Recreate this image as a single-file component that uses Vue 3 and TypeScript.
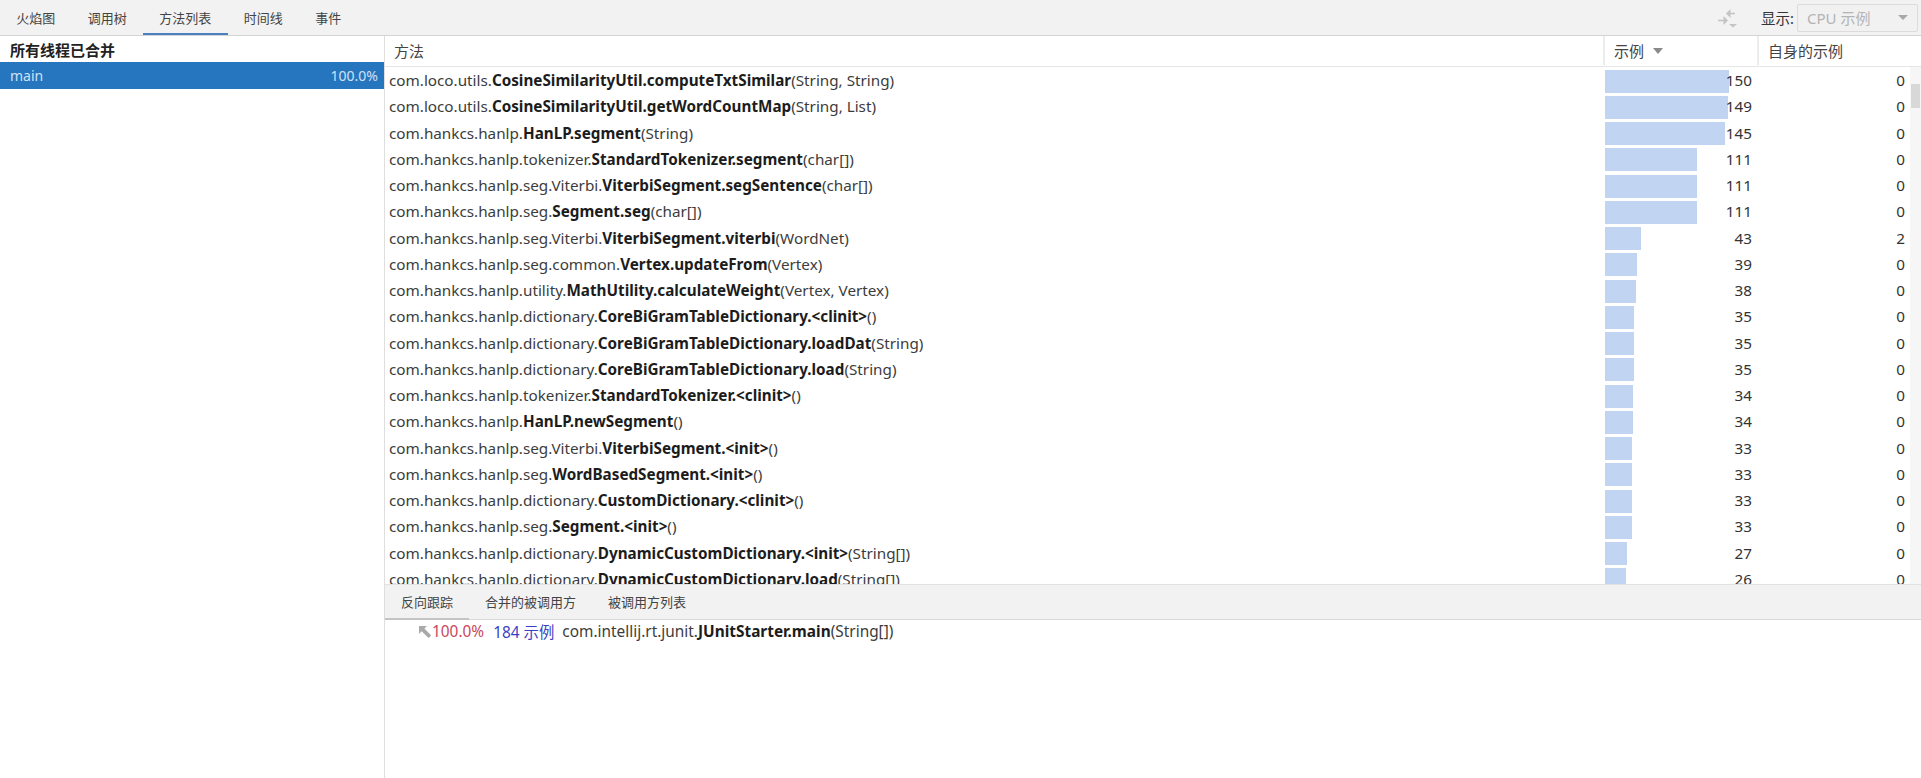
<script setup lang="ts">
interface Row {
  prefix: string
  name: string
  args: string
  samples: number
  self: number
}

const topTabs = ['火焰图', '调用树', '方法列表', '时间线', '事件']
const bottomTabs = ['反向跟踪', '合并的被调用方', '被调用方列表']

const rows: Row[] = [
  { prefix: 'com.loco.utils.', name: 'CosineSimilarityUtil.computeTxtSimilar', args: '(String, String)', samples: 150, self: 0 },
  { prefix: 'com.loco.utils.', name: 'CosineSimilarityUtil.getWordCountMap', args: '(String, List)', samples: 149, self: 0 },
  { prefix: 'com.hankcs.hanlp.', name: 'HanLP.segment', args: '(String)', samples: 145, self: 0 },
  { prefix: 'com.hankcs.hanlp.tokenizer.', name: 'StandardTokenizer.segment', args: '(char[])', samples: 111, self: 0 },
  { prefix: 'com.hankcs.hanlp.seg.Viterbi.', name: 'ViterbiSegment.segSentence', args: '(char[])', samples: 111, self: 0 },
  { prefix: 'com.hankcs.hanlp.seg.', name: 'Segment.seg', args: '(char[])', samples: 111, self: 0 },
  { prefix: 'com.hankcs.hanlp.seg.Viterbi.', name: 'ViterbiSegment.viterbi', args: '(WordNet)', samples: 43, self: 2 },
  { prefix: 'com.hankcs.hanlp.seg.common.', name: 'Vertex.updateFrom', args: '(Vertex)', samples: 39, self: 0 },
  { prefix: 'com.hankcs.hanlp.utility.', name: 'MathUtility.calculateWeight', args: '(Vertex, Vertex)', samples: 38, self: 0 },
  { prefix: 'com.hankcs.hanlp.dictionary.', name: 'CoreBiGramTableDictionary.<clinit>', args: '()', samples: 35, self: 0 },
  { prefix: 'com.hankcs.hanlp.dictionary.', name: 'CoreBiGramTableDictionary.loadDat', args: '(String)', samples: 35, self: 0 },
  { prefix: 'com.hankcs.hanlp.dictionary.', name: 'CoreBiGramTableDictionary.load', args: '(String)', samples: 35, self: 0 },
  { prefix: 'com.hankcs.hanlp.tokenizer.', name: 'StandardTokenizer.<clinit>', args: '()', samples: 34, self: 0 },
  { prefix: 'com.hankcs.hanlp.', name: 'HanLP.newSegment', args: '()', samples: 34, self: 0 },
  { prefix: 'com.hankcs.hanlp.seg.Viterbi.', name: 'ViterbiSegment.<init>', args: '()', samples: 33, self: 0 },
  { prefix: 'com.hankcs.hanlp.seg.', name: 'WordBasedSegment.<init>', args: '()', samples: 33, self: 0 },
  { prefix: 'com.hankcs.hanlp.dictionary.', name: 'CustomDictionary.<clinit>', args: '()', samples: 33, self: 0 },
  { prefix: 'com.hankcs.hanlp.seg.', name: 'Segment.<init>', args: '()', samples: 33, self: 0 },
  { prefix: 'com.hankcs.hanlp.dictionary.', name: 'DynamicCustomDictionary.<init>', args: '(String[])', samples: 27, self: 0 },
  { prefix: 'com.hankcs.hanlp.dictionary.', name: 'DynamicCustomDictionary.load', args: '(String[])', samples: 26, self: 0 },
]

const barWidth = (n: number): string => `${(n / 150) * 124}px`
</script>

<template>
  <div class="app">
    <header class="topbar">
      <nav class="tabs">
        <span v-for="t in topTabs" :key="t" class="tab" :class="{ active: t === '方法列表' }">{{ t }}</span>
      </nav>
      <div class="tools">
        <svg class="tool-icon" width="20" height="20" viewBox="0 0 20 20">
          <path d="M8 5.5 12.5 1v9z" fill="#c4c4c4" />
          <path d="M12 5.5h5" stroke="#c4c4c4" stroke-width="1.6" />
          <path d="M10 12.5 5.5 8v9z" fill="#c4c4c4" />
          <path d="M0 12.5h6" stroke="#c4c4c4" stroke-width="1.6" />
          <path d="M11 16h8l-4 3.5z" fill="#c4c4c4" />
        </svg>
        <span class="show-label">显示:</span>
        <div class="combo">
          <span>CPU 示例</span>
          <i class="combo-arrow"></i>
        </div>
      </div>
    </header>

    <main class="body">
      <aside class="threads">
        <div class="threads-head">所有线程已合并</div>
        <div class="thread selected">
          <span>main</span>
          <span>100.0%</span>
        </div>
      </aside>

      <section class="detail">
        <div class="table">
          <div class="thead">
            <div class="th th-method">方法</div>
            <div class="th"><span>示例</span><i class="sort-arrow"></i></div>
            <div class="th">自身的示例</div>
          </div>
          <div class="tbody">
            <div class="rows">
              <div v-for="r in rows" :key="r.prefix + r.name" class="row">
                <div class="cell-method">{{ r.prefix }}<b>{{ r.name }}</b>{{ r.args }}</div>
                <div class="cell-samples">
                  <span class="bar" :style="{ width: barWidth(r.samples) }"></span>
                  <span class="num">{{ r.samples }}</span>
                </div>
                <div class="cell-self">{{ r.self }}</div>
              </div>
            </div>
            <div class="scrollbar"><div class="thumb"></div></div>
          </div>
        </div>

        <nav class="subtabs">
          <span v-for="(t, i) in bottomTabs" :key="t" class="subtab" :class="{ active: i === 0 }">{{ t }}</span>
        </nav>

        <div class="trace">
          <svg class="trace-icon" width="14" height="14" viewBox="0 0 14 14">
            <path d="M1 1h8L6.4 3.6 13.2 10.4 10.6 13 3.6 6.2 1 9z" fill="#a9a9a9" />
          </svg>
          <span class="pct">100.0%</span>
          <span class="count">184 示例</span>
          <span class="trace-method">com.intellij.rt.junit.<b>JUnitStarter.main</b>(String[])</span>
        </div>
      </section>
    </main>
  </div>
</template>

<style>
html,
body {
  margin: 0;
  background: #fff;
}
</style>

<style scoped>
.app {
  width: 1921px;
  height: 778px;
  display: flex;
  flex-direction: column;
  overflow: hidden;
  font-family: "Noto Sans", "Noto Sans CJK SC", sans-serif;
  font-size: 15.25px;
  color: #333;
  background: #fff;
}

.topbar {
  height: 35px;
  flex: none;
  display: flex;
  justify-content: space-between;
  background: #f2f2f2;
  border-bottom: 1px solid #d4d4d4;
}

.tabs {
  display: flex;
}

.tab {
  padding: 0 16.25px;
  font-size: 13px;
  line-height: 36px;
  height: 35px;
  box-sizing: border-box;
  color: #444;
}

.tab.active {
  border-bottom: 2px solid #4a80c0;
}

.tools {
  display: flex;
  align-items: center;
  padding-right: 3px;
}

.tool-icon {
  margin-right: 23px;
}

.show-label {
  font-size: 14.5px;
  color: #333;
  margin-right: 3px;
}

.combo {
  width: 121px;
  height: 28px;
  box-sizing: border-box;
  display: flex;
  align-items: center;
  justify-content: space-between;
  padding: 0 9px;
  border: 1px solid #dcdcdc;
  border-radius: 2px;
  background: #f1f1f1;
  color: #b4b4b4;
  font-size: 15px;
}

.combo-arrow {
  width: 0;
  height: 0;
  border: 5px solid transparent;
  border-top: 5px solid #a8a8a8;
  border-bottom: 0;
}

.body {
  flex: 1;
  display: flex;
  min-height: 0;
}

.threads {
  width: 385px;
  flex: none;
  box-sizing: border-box;
  border-right: 1px solid #dedede;
}

.threads-head {
  height: 26px;
  line-height: 29px;
  padding-left: 10px;
  font-size: 15px;
  font-weight: 700;
  color: #222;
}

.thread {
  height: 27px;
  display: flex;
  align-items: center;
  justify-content: space-between;
  padding: 0 6px 0 10px;
  font-size: 14px;
}

.thread.selected {
  background: #2675bf;
  color: #cfe2f5;
}

.detail {
  flex: 1;
  min-width: 0;
  display: flex;
  flex-direction: column;
}

.table {
  height: 548px;
  flex: none;
  display: flex;
  flex-direction: column;
  overflow: hidden;
}

.thead {
  height: 31px;
  flex: none;
  box-sizing: border-box;
  display: grid;
  grid-template-columns: 1220px 154px 162px;
  border-bottom: 1px solid #e6e6e6;
}

.th {
  display: flex;
  align-items: center;
  padding-left: 9px;
  font-size: 15px;
  color: #444;
  border-right: 2px solid #ececec;
  margin-bottom: 1px;
}

.th:last-child {
  border-right: 0;
}

.sort-arrow {
  width: 0;
  height: 0;
  margin-left: 9px;
  border: 5px solid transparent;
  border-top: 6px solid #8a8a8a;
  border-bottom: 0;
}

.tbody {
  flex: 1;
  min-height: 0;
  display: flex;
}

.rows {
  flex: 1;
  min-width: 0;
  overflow: hidden;
}

.row {
  height: 26.26px;
  display: grid;
  grid-template-columns: 1220px 154px 151px;
  align-items: center;
}

.cell-method {
  padding-left: 4px;
  white-space: nowrap;
  color: #3c3c3c;
}

.cell-method b,
.trace-method b {
  font-weight: 700;
  color: #1c1c1c;
}

.cell-samples {
  position: relative;
  height: 23px;
  display: flex;
  align-items: center;
  justify-content: flex-end;
  padding-right: 7px;
}

.bar {
  position: absolute;
  left: 0;
  top: 1px;
  bottom: -1px;
  background: #c1d5f3;
}

.num {
  position: relative;
}

.cell-self {
  text-align: right;
  padding-right: 5px;
}

.scrollbar {
  width: 11px;
  flex: none;
  background: #f6f6f6;
}

.thumb {
  width: 9px;
  height: 24px;
  margin: 17px 0 0 1px;
  background: #d8d8d8;
}

.subtabs {
  height: 36px;
  flex: none;
  box-sizing: border-box;
  display: flex;
  background: #f2f2f2;
  border-top: 1px solid #e2e2e2;
  border-bottom: 1px solid #d8d8d8;
}

.subtab {
  padding: 0 16px;
  font-size: 13px;
  line-height: 34px;
  height: 35px;
  box-sizing: border-box;
  color: #444;
}

.subtab.active {
  border-bottom: 2px solid #c4c4c4;
}

.trace {
  display: flex;
  align-items: center;
  height: 23px;
  padding-left: 33px;
  font-size: 15.4px;
}

.trace-icon {
  flex: none;
}

.pct {
  color: #c9485c;
}

.count {
  margin-left: 9px;
  color: #3a3fc4;
}

.trace-method {
  margin-left: 8px;
  color: #3c3c3c;
}
</style>
